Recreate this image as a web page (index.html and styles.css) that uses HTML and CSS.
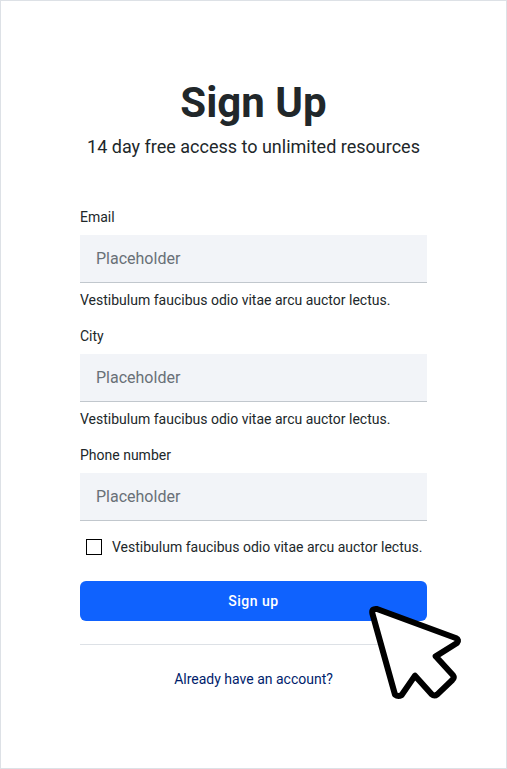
FILE: index.html
```html
<!DOCTYPE html>
<html lang="en">
<head>
<meta charset="utf-8">
<title>Sign Up</title>
<link rel="stylesheet" href="styles.css">
</head>
<body>
<main class="page">
  <h1 class="title">Sign Up</h1>
  <p class="subtitle">14 day free access to unlimited resources</p>
  <form class="form">
    <div class="field">
      <label class="label" for="email">Email</label>
      <input class="input" id="email" type="text" placeholder="Placeholder">
      <p class="help">Vestibulum faucibus odio vitae arcu auctor lectus.</p>
    </div>
    <div class="field">
      <label class="label" for="city">City</label>
      <input class="input" id="city" type="text" placeholder="Placeholder">
      <p class="help">Vestibulum faucibus odio vitae arcu auctor lectus.</p>
    </div>
    <div class="field">
      <label class="label" for="phone">Phone number</label>
      <input class="input" id="phone" type="text" placeholder="Placeholder">
    </div>
    <label class="check"><input class="box" type="checkbox"><span>Vestibulum faucibus odio vitae arcu auctor lectus.</span></label>
    <button class="button" type="button">Sign up</button>
  </form>
  <div class="footer"><a class="link" href="#">Already have an account?</a></div>
  <svg class="cursor" viewBox="0 0 375 360" aria-hidden="true">
    <path d="M67 70Q64 55 81 57L317 144Q329 150 321 159L257 199L309 256Q314 263 307 270L262 313Q253 320 245 313L195 257L155 315Q144 321 135 314Z" fill="#fff" stroke="#000" stroke-width="18" stroke-linejoin="round"/>
  </svg>
</main>
</body>
</html>
```
FILE: styles.css
```css
* { box-sizing: border-box; }
body { margin: 0; font-family: Roboto, sans-serif; color: #21272a; background: #fff; }
.page { position: relative; height: 769px; padding: 77px 79px 0; border: 1px solid #dde1e6; }
.title { margin: 0; font-size: 42px; line-height: 50px; font-weight: 700; text-align: center; }
.subtitle { margin: 7px 0 0; font-size: 18px; line-height: 24px; text-align: center; white-space: nowrap; }
.form { margin-top: 48px; }
.field { margin-bottom: 16px; }
.label { display: block; font-size: 14px; line-height: 20px; margin-bottom: 8px; }
.input { display: block; width: 100%; height: 48px; padding: 0 16px; border: 0; border-bottom: 1px solid #c1c7cd; border-radius: 0; background: #f2f4f8; font: 16px/22px Roboto, sans-serif; }
.input::placeholder { color: #697077; opacity: 1; }
.help { margin: 7px 0 0; font-size: 14px; line-height: 20px; }
.check { display: flex; align-items: center; gap: 10px; height: 20px; padding-left: 6px; font-size: 14px; line-height: 20px; white-space: nowrap; }
.box { appearance: none; width: 16px; height: 16px; margin: 0; border: 1px solid #000; background: #fff; }
.button { display: block; width: 100%; height: 40px; margin-top: 24px; padding: 0; border: 0; border-radius: 6px; background: #0f62fe; color: #fff; font: 500 14px/20px Roboto, sans-serif; letter-spacing: 0.5px; }
.footer { margin-top: 23px; padding-top: 24px; border-top: 1px solid #dde1e6; font-size: 14px; line-height: 20px; text-align: center; }
.link { color: #001d6c; text-decoration: none; }
.cursor { position: absolute; left: 349px; top: 589px; width: 125px; height: 120px; }
```
